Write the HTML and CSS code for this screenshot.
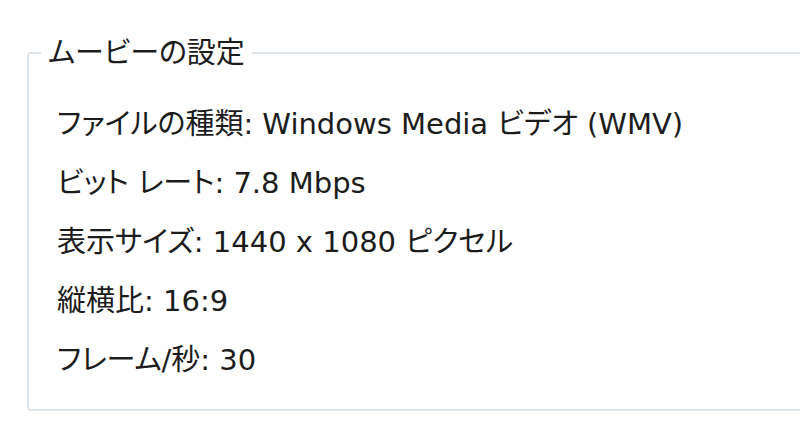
FILE: index.html
```html
<!DOCTYPE html>
<html lang="ja">
<head>
    <meta charset="UTF-8">
    <title>ムービーの設定</title>
    <link rel="stylesheet" href="styles.css">
</head>
<body>
    <fieldset class="settings-group">
        <legend>ムービーの設定</legend>
        <p class="setting">ファイルの種類: Windows Media ビデオ (WMV)</p>
        <p class="setting">ビット レート: 7.8 Mbps</p>
        <p class="setting">表示サイズ: 1440 x 1080 ピクセル</p>
        <p class="setting">縦横比: 16:9</p>
        <p class="setting">フレーム/秒: 30</p>
    </fieldset>
</body>
</html>
```

FILE: styles.css
```css
body {
    margin: 0;
    background: #fff;
    font-family: "DejaVu Sans", "Noto Sans CJK JP", sans-serif;
    font-feature-settings: "palt";
    color: #1c1c1c;
    overflow: hidden;
}

.settings-group {
    margin: 38px 0 0 27px;
    padding: 27px 0 19px 12px;
    width: 820px;
    border: 2px solid #dce4ea;
    border-radius: 4px;
}

.settings-group legend {
    font-size: 29px;
    line-height: 30px;
    padding: 0 7px;
}

.setting {
    margin: 0;
    padding-left: 16px;
    font-size: 29px;
    line-height: 59px;
}
```
